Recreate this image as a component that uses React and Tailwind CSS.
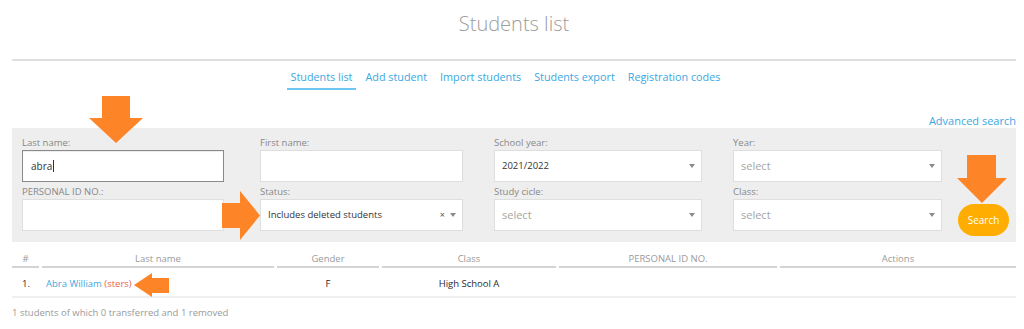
import React from "react";

const font = { fontFamily: '"Open Sans", "Liberation Sans", sans-serif' };

function Caret() {
	return (
		<svg width="6" height="4" viewBox="0 0 6 4" className="shrink-0">
			<polygon points="0,0 6,0 3,4" fill="#8a8a8a" />
		</svg>
	);
}

function Field({ label, width, mr, children }) {
	return (
		<div className={`${width} ${mr} flex flex-col`}>
			<span className="h-[14px] text-[9.5px] leading-[14px] text-[#888]">{label}</span>
			{children}
		</div>
	);
}

function TextInput({ value, focused }) {
	return (
		<div
			className={`flex h-[32px] items-center border bg-white px-[8px] text-[10px] text-[#333] ${
				focused ? "border-[#8a8a8a] shadow-[inset_0_1px_1px_rgba(0,0,0,0.08)]" : "border-[#dedede]"
			}`}>
			{value}
			{focused ? <span className="ml-[1px] h-[12px] w-px bg-[#333]" /> : null}
		</div>
	);
}

function Select({ value, placeholder, clearable }) {
	return (
		<div className="flex h-[32px] items-center border border-[#dedede] bg-white pl-[7px] pr-[6px]">
			<span className={`flex-1 ${value ? "text-[9.5px] text-[#333]" : "text-[11px] text-[#a5a5a5]"}`}>
				{value || placeholder}
			</span>
			{clearable ? <span className="mr-[5px] text-[9px] text-[#555]">×</span> : null}
			<Caret />
		</div>
	);
}

function Arrow({ className, w, h, points }) {
	return (
		<svg
			width={w}
			height={h}
			viewBox={`0 0 ${w} ${h}`}
			className={`pointer-events-none absolute ${className}`}>
			<polygon points={points} fill="#fe8428" />
		</svg>
	);
}

const tabs = ["Students list", "Add student", "Import students", "Students export", "Registration codes"];

const cols = [
	{ name: "#", w: "w-[27px]" },
	{ name: "Last name", w: "w-[232px]" },
	{ name: "Gender", w: "w-[102px]" },
	{ name: "Class", w: "w-[174px]" },
	{ name: "PERSONAL ID NO.", w: "w-[218px]" },
	{ name: "Actions", w: "flex-1" },
];

export default function App() {
	return (
		<div className="relative h-[329px] w-[1024px] overflow-hidden bg-white px-[12px] pr-[8px]" style={font}>
			<h1 className="h-[48px] text-center text-[20px] font-light leading-[48px] text-[#9d9d9d]">
				Students list
			</h1>
			<div className="mt-[11px] h-[2px] bg-[#e0e0e0]" />

			<nav className="flex justify-center gap-[5px] pr-[17px]">
				{tabs.map((t, i) => (
					<a
						key={t}
						className={`px-[4px] pb-[3px] pt-[8px] text-[10.8px] leading-[16px] text-[#3aa8e2] ${
							i === 0 ? "border-b-2 border-[#6cc6f0]" : "border-b-2 border-transparent"
						}`}>
						{t}
					</a>
				))}
			</nav>

			<div className="mt-[24px] text-right text-[11px] leading-[14px] text-[#3aa8e2]">
				Advanced search
			</div>

			<div className="flex bg-[#eeeeee] pb-[11px] pl-[10px] pt-[8px]">
				<div className="flex flex-col gap-[3px]">
					<div className="flex">
						<Field label="Last name:" width="w-[202px]" mr="mr-[36px]">
							<TextInput value="abra" focused />
						</Field>
						<Field label="First name:" width="w-[203px]" mr="mr-[31px]">
							<TextInput />
						</Field>
						<Field label="School year:" width="w-[208px]" mr="mr-[31px]">
							<Select value="2021/2022" />
						</Field>
						<Field label="Year:" width="w-[209px]" mr="mr-0">
							<Select placeholder="select" />
						</Field>
					</div>
					<div className="flex">
						<Field label="PERSONAL ID NO.:" width="w-[202px]" mr="mr-[36px]">
							<TextInput />
						</Field>
						<Field label="Status:" width="w-[203px]" mr="mr-[31px]">
							<Select value="Includes deleted students" clearable />
						</Field>
						<Field label="Study cicle:" width="w-[208px]" mr="mr-[31px]">
							<Select placeholder="select" />
						</Field>
						<Field label="Class:" width="w-[209px]" mr="mr-0">
							<Select placeholder="select" />
						</Field>
					</div>
				</div>
				<div className="-mb-[6px] ml-[16px] pt-[68px]">
					<button className="h-[32px] w-[51px] rounded-full bg-[#ffad00] text-[10px] text-white">
						Search
					</button>
				</div>
			</div>

			<div className="flex gap-[3px]">
				{cols.map((c) => (
					<div
						key={c.name}
						className={`${c.w} border-b-2 border-[#d4d4d4] pt-[10px] text-center text-[9.5px] leading-[14px] text-[#9a9a9a]`}>
						{c.name}
					</div>
				))}
			</div>
			<div className="flex gap-[3px] border-b-2 border-[#efefef] pb-[5px] pt-[9px] text-[9.5px] leading-[14px] text-[#2a2a2a]">
				<div className="w-[27px] pl-[10px]">1.</div>
				<div className="w-[232px] pl-[4px]">
					<span className="text-[#45a6dd]">Abra William</span>{" "}
					<span className="text-[#e8664b]">(sters)</span>
				</div>
				<div className="w-[102px] text-center">F</div>
				<div className="w-[174px] text-center">High School A</div>
				<div className="w-[218px]" />
				<div className="flex-1" />
			</div>
			<div className="mt-[8px] text-[9.5px] leading-[14px] text-[#9a9a9a]">
				1 students of which 0 transferred and 1 removed
			</div>

			<Arrow className="left-[89px] top-[96px]" w={54} h={47} points="13,0 41,0 41,22 54,22 27,47 0,22 13,22" />
			<Arrow className="left-[222px] top-[191px]" w={38} h={49} points="0,12 18,12 18,0 38,24.5 18,49 18,37 0,37" />
			<Arrow className="left-[957px] top-[155px]" w={50} h={48} points="10,0 39,0 39,23 50,23 25,48 0,23 10,23" />
			<Arrow className="left-[134px] top-[273px]" w={35} h={24} points="0,12 18,0 18,5 35,5 35,20 18,20 18,24" />
		</div>
	);
}
